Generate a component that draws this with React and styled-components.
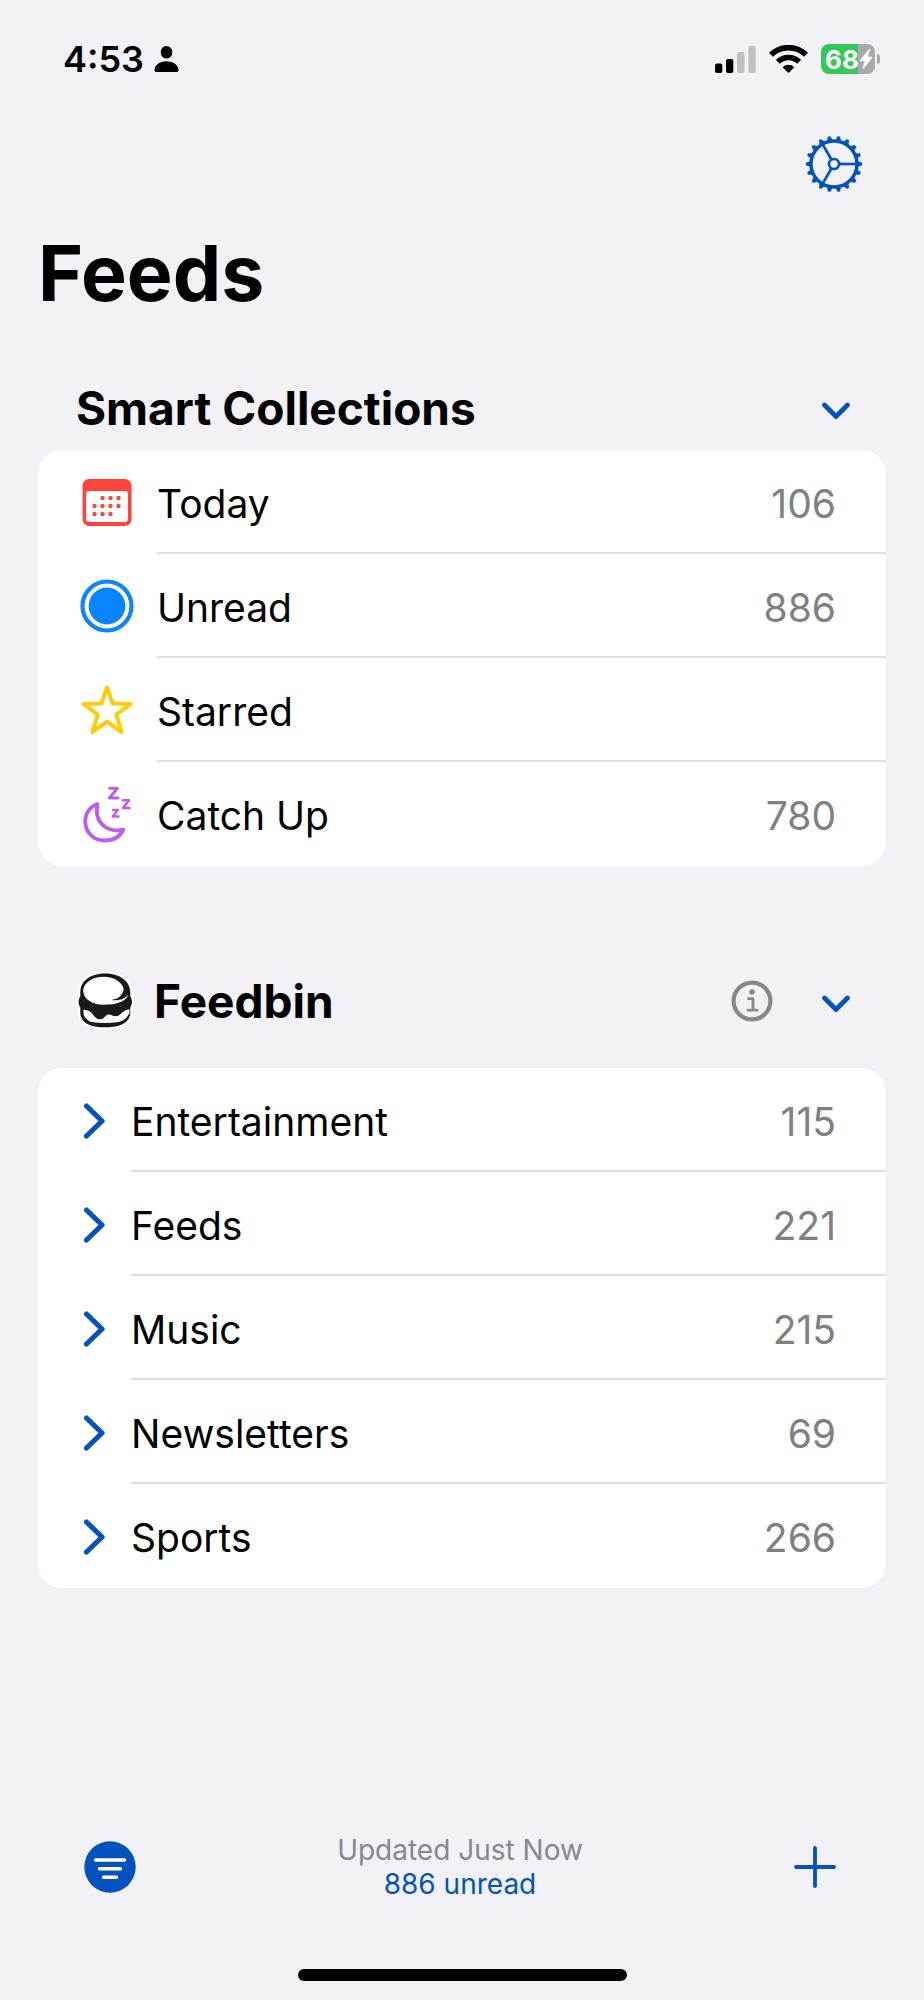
import React, { useState } from "react";
import styled, { createGlobalStyle } from "styled-components";

const GlobalStyle = createGlobalStyle`
  * {
    box-sizing: border-box;
  }
  body {
    margin: 0;
    background: #f1f1f6;
    color: #000;
    font-family: Inter, "Liberation Sans", sans-serif;
  }
  svg {
    display: block;
    flex: none;
  }
`;

const Screen = styled.div`
  display: flex;
  flex-direction: column;
  min-height: 100vh;
`;
const StatusBar = styled.header`
  display: flex;
  align-items: center;
  justify-content: space-between;
  height: 118px;
  padding: 0 44px 0 63px;
`;
const StatusGroup = styled.div`
  display: flex;
  align-items: center;
  gap: ${(props) => props.$gap}px;
`;
const Time = styled.span`
  font-size: 36px;
  font-weight: 600;
`;
const Battery = styled.div`
  display: flex;
  align-items: center;
  gap: 2px;
`;
const BatteryBody = styled.div`
  display: flex;
  align-items: center;
  width: 54px;
  height: 30px;
  padding-left: 4px;
  border-radius: 8px;
  background: linear-gradient(90deg, #34c759 68%, #a9a9ad 68%);
  color: #fff;
  font-size: 26px;
  font-weight: 700;
`;
const BatteryTip = styled.div`
  width: 3px;
  height: 10px;
  border-radius: 0 3px 3px 0;
  background: #a9a9ad;
`;
const Toolbar = styled.div`
  display: flex;
  align-items: center;
  justify-content: flex-end;
  height: 92px;
  padding: 0 61px;
`;
const IconButton = styled.button`
  display: grid;
  place-content: center;
  padding: 0;
  border: none;
  background: none;
  color: #0452bf;
  cursor: pointer;
`;
const Title = styled.h1`
  margin: 0;
  padding: 0 38px 30px;
  font-size: 77px;
  font-weight: 700;
  line-height: 126px;
`;
const Section = styled.section`
  margin: 0 38px 68px;
`;
const SectionHeader = styled.div`
  display: flex;
  align-items: center;
  gap: 48px;
  height: ${(props) => (props.$tall ? 134 : 84)}px;
  padding: 0 35px 0 38px;
`;
const SectionTitle = styled.h2`
  display: flex;
  flex: 1;
  align-items: center;
  gap: 18px;
  margin: 0;
  font-size: 46px;
  font-weight: 700;
`;
const List = styled.ul`
  margin: 0;
  padding: 0;
  border-radius: 24px;
  background: #fff;
  list-style: none;
`;
const Row = styled.li`
  display: flex;
  padding-left: 42px;
`;
const RowIcon = styled.div`
  display: flex;
  align-items: center;
  width: ${(props) => props.$width}px;
`;
const RowLink = styled.a`
  display: flex;
  flex: 1;
  align-items: center;
  justify-content: space-between;
  height: 104px;
  padding: 4px 50px 0 0;
  border-bottom: 2px solid #dededf;
  color: #000;
  font-size: 39px;
  text-decoration: none;
  ${Row}:last-child & {
    border-bottom-color: transparent;
  }
`;
const Count = styled.span`
  color: #808080;
`;
const BottomBar = styled.footer`
  display: grid;
  grid-template-columns: 1fr auto 1fr;
  align-items: center;
  justify-items: start;
  margin-top: auto;
  padding: 0 88px 0 84px;
  ${IconButton}:last-child {
    justify-self: end;
  }
`;
const Status = styled.p`
  margin: 0;
  color: #88888c;
  font-size: 28px;
  line-height: 34px;
  text-align: center;
`;
const UnreadLabel = styled.span`
  display: block;
  color: #0452bf;
`;
const HomeIndicator = styled.div`
  width: 329px;
  height: 12px;
  margin: 68px auto 19px;
  align-self: center;
  border-radius: 6px;
  background: #000;
  margin-bottom: 19px;
`;

const PersonIcon = () => (
  <svg width="25" height="26" viewBox="0 0 25 26">
    <ellipse cx="12.500" cy="6.300" rx="5.800" ry="6.300" />
    <path d="M.5 24c0-4.500 5-8.700 12-8.700s12 4.200 12 8.700c0 1.300-.6 2-1.800 2H2.300C1.100 26 .5 25.300.5 24z" />
  </svg>
);

const SignalIcon = () => (
  <svg width="41" height="27" viewBox="0 0 41 27">
    <rect y="17.500" width="7.300" height="9.500" rx="2" />
    <rect x="11" y="13" width="7.300" height="14" rx="2" />
    <rect x="22.200" y="6" width="7.300" height="21" rx="2" fill="#c0c0c4" />
    <rect x="33.400" width="7.300" height="27" rx="2" fill="#c0c0c4" />
  </svg>
);

const WifiIcon = () => (
  <svg width="39" height="28" viewBox="0 0 39 28">
    <g fill="none" stroke="#000" strokeWidth="5.600">
      <path d="M2 9.800a25 25 0 0 1 35 0" />
      <path d="M8.800 16.800a15.400 15.400 0 0 1 21.400 0" />
    </g>
    <path d="M13.600 22.200a8.600 8.600 0 0 1 11.800 0l-5 5.100q-.9.900-1.800 0z" />
  </svg>
);

const BoltIcon = () => (
  <svg width="14" height="20" viewBox="0 0 14 20">
    <path
      d="M9.800.4 1 11c-.5.600-.2 1.200.5 1.200h4.300L3.600 18.600c-.3 1 .5 1.500 1.200.7L13 9c.5-.6.200-1.200-.5-1.200H8.700l2.300-6.600c.3-1-.5-1.500-1.200-.8z"
      fill="#fff"
    />
  </svg>
);

const GearIcon = () => {
  const teeth = Array.from({ length: 18 }, (_, i) => i * 20);
  return (
    <svg width="58" height="58" viewBox="-29 -29 58 58">
      <g fill="none" stroke="currentColor" strokeWidth="2.700">
        <circle r="23" strokeWidth="3.400" />
        <circle r="5" />
        {[0, 120, 240].map((angle) => (
          <path key={angle} d="M5.500 0H23" transform={`rotate(${angle})`} />
        ))}
      </g>
      {teeth.map((angle) => (
        <path
          key={angle}
          d="M24-2.800 27.800-1.400q.8 1.400 0 2.800L24 2.800z"
          fill="currentColor"
          transform={`rotate(${angle})`}
        />
      ))}
    </svg>
  );
};

const ChevronDown = () => (
  <svg width="30" height="26" viewBox="0 -6 30 26">
    <path
      d="m3.500 4 11.500 11.500L26.500 4"
      fill="none"
      stroke="currentColor"
      strokeWidth="4.800"
      strokeLinecap="round"
      strokeLinejoin="round"
    />
  </svg>
);

const ChevronRight = () => (
  <svg width="28" height="38" viewBox="-3 -2 28 38">
    <path
      d="m3.500 3 15.500 15L3.500 33"
      fill="none"
      stroke="currentColor"
      strokeWidth="5.200"
      strokeLinecap="round"
      strokeLinejoin="round"
    />
  </svg>
);

const InfoIcon = () => (
  <svg width="42" height="42" viewBox="0 0 42 42">
    <g fill="none" stroke="#88888c" strokeLinecap="round" strokeLinejoin="round">
      <circle cx="21" cy="21" r="18.400" strokeWidth="4.200" />
      <path d="M17.500 18.700H22v11.500M17 30.200h9" strokeWidth="2.800" />
    </g>
    <circle cx="21" cy="12" r="2.800" fill="#88888c" />
  </svg>
);

const CalendarIcon = () => {
  const dots = [
    [21, 19], [29, 19], [37, 19],
    [13, 27], [21, 27], [29, 27], [37, 27],
    [13, 35], [21, 35], [29, 35],
  ];
  return (
    <svg width="54" height="47" viewBox="-1.500 0 54 47">
      <rect x="1" width="49" height="47" rx="6.500" fill="#ff453a" />
      <rect x="4.600" y="12" width="41.800" height="31" rx="3" fill="#fff" />
      {dots.map(([x, y]) => (
        <circle key={`${x}-${y}`} cx={x} cy={y} r="2.200" fill="#ff453a" />
      ))}
    </svg>
  );
};

const UnreadIcon = () => (
  <svg width="54" height="54" viewBox="-27 -27 54 54">
    <circle r="24.500" fill="none" stroke="#0a84ff" strokeWidth="4.200" />
    <circle r="18.400" fill="#0a84ff" />
  </svg>
);

const StarIcon = () => (
  <svg width="54" height="54" viewBox="0 0 54 54">
    <path
      d="M27 4.500 32.700 20.600 50.500 21 36.300 31.600 41.600 49 27 38.600 12.400 49 17.700 31.600 3.500 21 21.300 20.600z"
      fill="none"
      stroke="#ffcc0a"
      strokeWidth="4"
      strokeLinejoin="round"
    />
  </svg>
);

const MoonIcon = () => (
  <svg width="54" height="58" viewBox="0 0 54 58">
    <g fill="none" stroke="#bf5af2" strokeLinecap="round" strokeLinejoin="round">
      <path
        d="M17.500 19C9 22 4.600 29.500 5.300 38c1 10.500 9 17.500 19 17.500 9 0 16-4 18.900-11C28 48 13.500 38.500 17.500 19z"
        strokeWidth="3.800"
      />
      <path d="M29.500 3.300h8L29.300 13h8.700" strokeWidth="2.800" />
      <path d="M43 15.300h6l-6 7.700h6.500" strokeWidth="2.600" />
      <path d="M33 25h5l-5.300 6.500h5.800" strokeWidth="2.400" />
    </g>
  </svg>
);

const bunOutline =
  "M29 3.500C15 3.500 4.500 10.500 4.300 22v4.500C2 29.500 2 34 4.300 37.500V44C6 54 15 57.300 29 57.300S52.500 54 54.300 44v-6.500c2.200-3.500 2.200-8 0-11V22C54 10.500 43 3.500 29 3.500z";

const BurgerIcon = () => (
  <svg width="60" height="62" viewBox="0 0 60 62">
    <path
      d={bunOutline}
      fill="#1a1a1a"
      stroke="#fff"
      strokeWidth="5"
      strokeLinejoin="round"
    />
    <path d={bunOutline} fill="#1a1a1a" />
    <ellipse cx="27.500" cy="20.800" rx="20.300" ry="14" fill="#fff" />
    <path d="M36.500 29.500C42 29 46.500 25.500 48 19l2 6c-3 4-8 6-13.500 5.500z" fill="#1a1a1a" />
    <path d="M33 34.500 36.500 30.500C42 31 48 29.500 52 25c-1 5-9 9-19 9.500z" fill="#fff" />
    <path
      d="M7.500 39.500c3 1 6 .8 8.500 3.500 2.500 3 3.500 6.300 8 6.300s4.500-4 8-4.800c3-.7 4.500 1.800 8 1.800 5 0 5-6 13.500-7v4c-3 5.500-7 8-11 8.700q-13.500 2-27 0C11.500 51 7.500 46.500 7.500 43z"
      fill="#fff"
    />
    <path
      d="M7.500 39c3 1 6 .8 8.500 3.500 2.500 3 3.500 6.300 8 6.300s4.500-4 8-4.800c3-.7 4.500 1.800 8 1.800 5 0 5-6 13.500-7z"
      fill="#1a1a1a"
    />
  </svg>
);

const FilterIcon = () => (
  <svg width="52" height="52" viewBox="0 0 52 52">
    <circle cx="26" cy="26" r="25.700" fill="currentColor" />
    <path
      d="M11.500 19h29M15.500 27.700h21M19.500 36.300h13"
      stroke="#fff"
      strokeWidth="3.400"
      strokeLinecap="round"
    />
  </svg>
);

const PlusIcon = () => (
  <svg width="42" height="42" viewBox="0 0 42 42">
    <path
      d="M21 2v38M2 21h38"
      stroke="currentColor"
      strokeWidth="3.800"
      strokeLinecap="round"
    />
  </svg>
);

const collections = [
  { name: "Today", count: 106, Icon: CalendarIcon },
  { name: "Unread", count: 886, Icon: UnreadIcon },
  { name: "Starred", Icon: StarIcon },
  { name: "Catch Up", count: 780, Icon: MoonIcon },
];

const folders = [
  { name: "Entertainment", count: 115 },
  { name: "Feeds", count: 221 },
  { name: "Music", count: 215 },
  { name: "Newsletters", count: 69 },
  { name: "Sports", count: 266 },
];

const App = () => {
  const [showCollections, setShowCollections] = useState(true);
  const [showFolders, setShowFolders] = useState(true);

  return (
    <>
      <GlobalStyle />
      <Screen>
        <StatusBar>
          <StatusGroup $gap={10}>
            <Time>4:53</Time>
            <PersonIcon />
          </StatusGroup>
          <StatusGroup $gap={13}>
            <SignalIcon />
            <WifiIcon />
            <Battery>
              <BatteryBody>
                68
                <BoltIcon />
              </BatteryBody>
              <BatteryTip />
            </Battery>
          </StatusGroup>
        </StatusBar>
        <Toolbar>
          <IconButton aria-label="Settings">
            <GearIcon />
          </IconButton>
        </Toolbar>
        <main>
          <Title>Feeds</Title>
          <Section>
            <SectionHeader>
              <SectionTitle>Smart Collections</SectionTitle>
              <IconButton
                aria-label="Toggle Smart Collections"
                onClick={() => setShowCollections(!showCollections)}
              >
                <ChevronDown />
              </IconButton>
            </SectionHeader>
            {showCollections && (
              <List>
                {collections.map(({ name, count, Icon }) => (
                  <Row key={name}>
                    <RowIcon $width={77}>
                      <Icon />
                    </RowIcon>
                    <RowLink href="#">
                      {name}
                      <Count>{count}</Count>
                    </RowLink>
                  </Row>
                ))}
              </List>
            )}
          </Section>
          <Section>
            <SectionHeader $tall>
              <SectionTitle>
                <BurgerIcon />
                Feedbin
              </SectionTitle>
              <IconButton aria-label="Account info">
                <InfoIcon />
              </IconButton>
              <IconButton
                aria-label="Toggle Feedbin"
                onClick={() => setShowFolders(!showFolders)}
              >
                <ChevronDown />
              </IconButton>
            </SectionHeader>
            {showFolders && (
              <List>
                {folders.map(({ name, count }) => (
                  <Row key={name}>
                    <RowIcon $width={51}>
                      <IconButton aria-label={`Expand ${name}`}>
                        <ChevronRight />
                      </IconButton>
                    </RowIcon>
                    <RowLink href="#">
                      {name}
                      <Count>{count}</Count>
                    </RowLink>
                  </Row>
                ))}
              </List>
            )}
          </Section>
        </main>
        <BottomBar>
          <IconButton aria-label="Filter unread">
            <FilterIcon />
          </IconButton>
          <Status>
            Updated Just Now
            <UnreadLabel>886 unread</UnreadLabel>
          </Status>
          <IconButton aria-label="Add">
            <PlusIcon />
          </IconButton>
        </BottomBar>
        <HomeIndicator />
      </Screen>
    </>
  );
};

export default App;
